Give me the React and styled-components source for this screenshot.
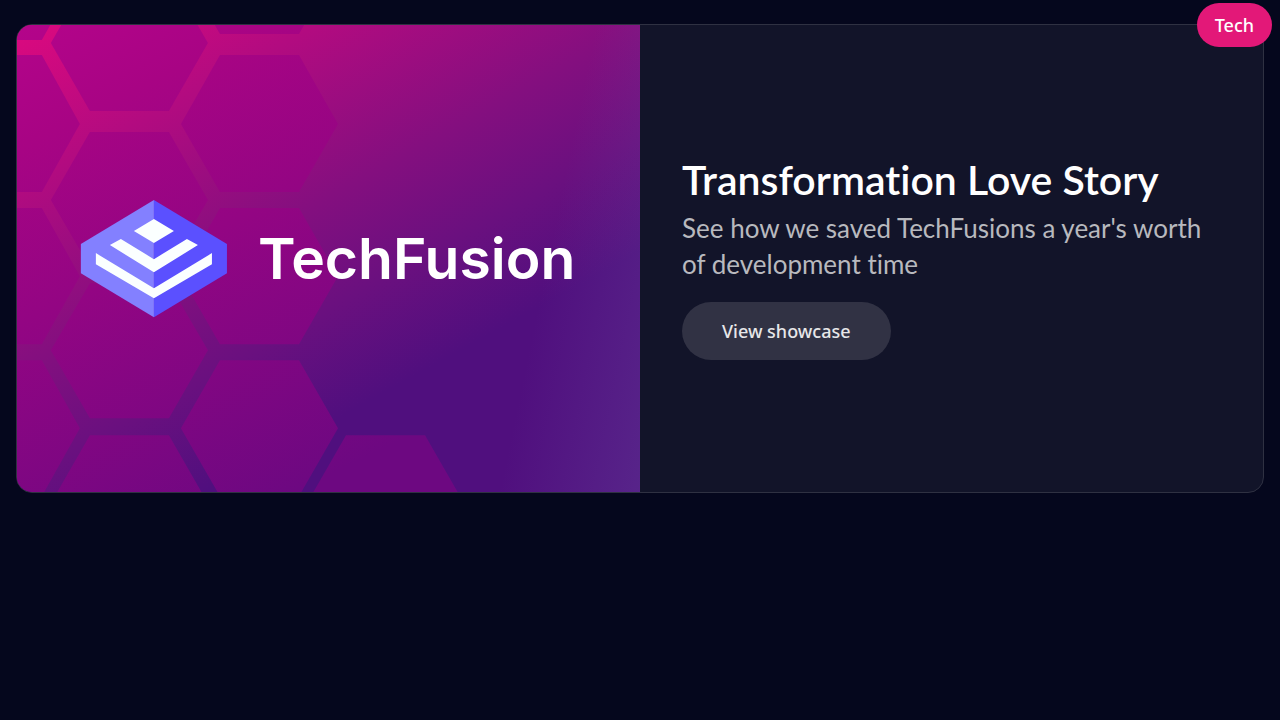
import React from 'react';
import styled, { createGlobalStyle } from 'styled-components';

const GlobalStyle = createGlobalStyle`
  *, *::before, *::after { box-sizing: border-box; }
  body {
    margin: 0;
    background: #05071d;
    color: #ffffff;
    font-family: "Noto Sans", sans-serif;
  }
`;

const Page = styled.main`
  padding: 24px 16px;
`;

const Card = styled.article`
  position: relative;
  display: grid;
  grid-template-columns: 1fr 1fr;
  background: #121429;
  border: 1px solid #2f3142;
  border-radius: 16px;
`;

const Media = styled.div`
  aspect-ratio: 4 / 3;
  overflow: hidden;
  border-radius: 15px 0 0 15px;
`;

const Artwork = styled.svg`
  display: block;
  width: 100%;
  height: 100%;
`;

const Wordmark = styled.text`
  fill: #ffffff;
  font-family: Inter, sans-serif;
  font-size: 57px;
  font-weight: 600;
`;

const Content = styled.div`
  display: flex;
  flex-direction: column;
  align-items: flex-start;
  justify-content: center;
  padding: 42px;
`;

const Title = styled.h2`
  margin: 0 0 8px;
  font-family: Lato, sans-serif;
  font-size: 41px;
  font-weight: 600;
  line-height: 44px;
  font-variant-ligatures: none;
`;

const Description = styled.p`
  margin: 0 0 20px;
  color: #b8b9be;
  font-family: Lato, sans-serif;
  font-size: 26px;
  line-height: 36px;
  font-variant-ligatures: none;
`;

const ShowcaseButton = styled.button`
  padding: 16px 40px;
  border: 0;
  border-radius: 29px;
  background: #313244;
  color: #e7e7e9;
  font-family: "Noto Sans", sans-serif;
  font-size: 18px;
  font-weight: 500;
  line-height: 26px;
  cursor: pointer;
`;

const Badge = styled.span`
  position: absolute;
  top: -22px;
  right: -9px;
  padding: 9px 18px;
  border-radius: 22px;
  background: #e31878;
  font-size: 18px;
  font-weight: 500;
  line-height: 26px;
`;

const hexagons = [
  // left edge column
  'M-60 -60H25L63 -53 25 15H-60Z',
  'M-60 30H25L63 99 25 167H-60Z',
  'M-60 183H25L63 251 25 319H-60Z',
  'M-60 335H25L63 403 25 471H-60Z',
  // second column
  'M73 -50H152L191 18 152 86H73L34 18Z',
  'M73 107H152L191 175 152 242H73L34 175Z',
  'M73 258H152L191 325 152 393H73L34 325Z',
  'M73 410H152L191 478 152 546H73L34 478Z',
  // third column
  'M203 -127H282L321 -59 282 9H203L164 -59Z',
  'M203 30H282L321 99 282 167H203L164 99Z',
  'M203 183H282L321 251 282 319H203L164 251Z',
  'M203 335H282L321 403 282 471H203L164 403Z',
  // fourth column
  'M329 410H408L447 478 408 546H329L290 478Z',
];

function FusionArtwork() {
  return (
    <Artwork viewBox="0 0 623 467" preserveAspectRatio="xMidYMid slice" role="img" aria-label="TechFusion">
      <defs>
        <linearGradient id="backdrop" gradientUnits="userSpaceOnUse" x1="0" y1="0" x2="241" y2="437">
          <stop offset="0.03" stopColor="#d8097f" />
          <stop offset="0.29" stopColor="#b20b80" />
          <stop offset="0.6" stopColor="#840f7f" />
          <stop offset="0.8" stopColor="#6a107f" />
          <stop offset="1" stopColor="#500f7e" />
        </linearGradient>
        <linearGradient id="glow" gradientUnits="userSpaceOnUse" x1="494" y1="409" x2="629" y2="437">
          <stop offset="0" stopColor="#6a5aa8" stopOpacity="0" />
          <stop offset="1" stopColor="#6a5aa8" stopOpacity="0.28" />
        </linearGradient>
        <linearGradient id="cells" gradientUnits="userSpaceOnUse" x1="0" y1="0" x2="234" y2="487">
          <stop offset="0" stopColor="#b4048a" />
          <stop offset="0.2" stopColor="#a80484" />
          <stop offset="0.5" stopColor="#930583" />
          <stop offset="1" stopColor="#6d0881" />
        </linearGradient>
      </defs>
      <rect width="623" height="467" fill="url(#backdrop)" />
      <rect width="623" height="467" fill="url(#glow)" />
      {hexagons.map((d) => (
        <path key={d} d={d} fill="url(#cells)" />
      ))}
      <path d="M137 175L64 219V248L137 292Z" fill="#8380ff" />
      <path d="M137 175L210 219V248L137 292Z" fill="#5b50ff" />
      <path
        d="M137 194L157 206 137 218 117 206ZM93 220L104 214 137 234 170 214 181 220 137 247ZM79 228L137 263 195 228V239L137 273 79 239Z"
        fill="#fbffff"
      />
      <Wordmark x="241" y="254">TechFusion</Wordmark>
    </Artwork>
  );
}

export default function App() {
  return (
    <>
      <GlobalStyle />
      <Page>
        <Card>
          <Media>
            <FusionArtwork />
          </Media>
          <Content>
            <Title>Transformation Love Story</Title>
            <Description>See how we saved TechFusions a year's worth of development time</Description>
            <ShowcaseButton type="button">View showcase</ShowcaseButton>
          </Content>
          <Badge>Tech</Badge>
        </Card>
      </Page>
    </>
  );
}
